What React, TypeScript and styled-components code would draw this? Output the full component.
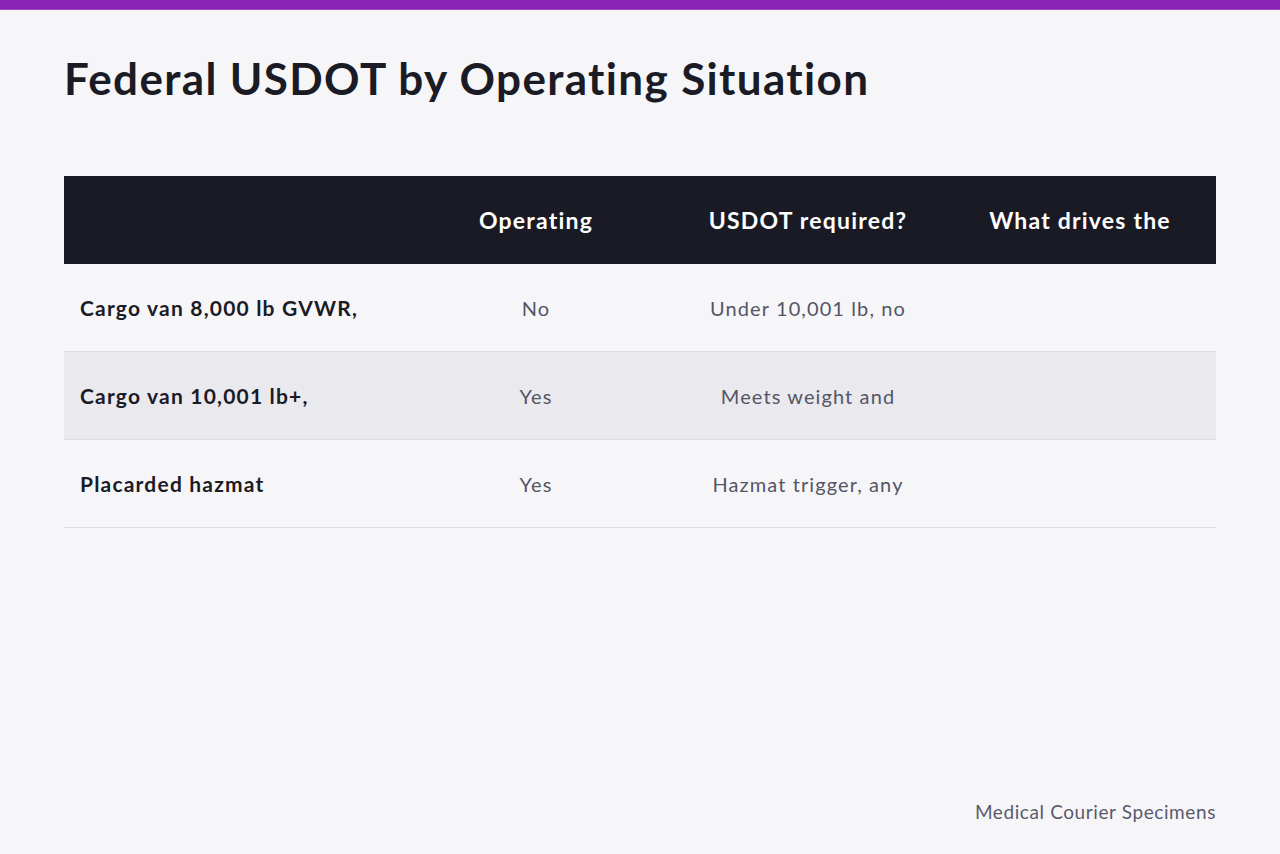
import styled, { createGlobalStyle } from "styled-components";

const GlobalStyle = createGlobalStyle`
  html, body {
    margin: 0;
    padding: 0;
    background: #f6f6f9;
  }
  * {
    box-sizing: border-box;
  }
`;

const Page = styled.div`
  width: 100vw;
  min-height: 100vh;
  height: 854px;
  display: flex;
  flex-direction: column;
  background: #f6f6f9;
  font-family: Lato, "Open Sans", sans-serif;
  color: #1b1b26;
`;

const TopBar = styled.div`
  height: 10px;
  background: #8a22b8;
  border-bottom: 1px solid #a04ccb;
  flex-shrink: 0;
`;

const Main = styled.main`
  flex: 1;
  display: flex;
  flex-direction: column;
  padding: 0 64px 30px;
`;

const Title = styled.h1`
  margin: 40px 0 0;
  font-size: 44px;
  line-height: 56px;
  font-weight: 700;
  letter-spacing: 1.35px;
  color: #1b1b26;
`;

const Table = styled.div`
  margin-top: 70px;
  display: flex;
  flex-direction: column;
`;

const Row = styled.div<{ $head?: boolean; $shaded?: boolean }>`
  display: grid;
  grid-template-columns: 336px repeat(3, 1fr);
  height: 88px;
  align-items: center;
  background: ${(p) => (p.$head ? "#1a1a25" : p.$shaded ? "#e9e9ee" : "transparent")};
  border-bottom: ${(p) => (p.$head ? "none" : "1px solid #dcdce3")};
`;

const HeadCell = styled.div`
  padding: 0 16px;
  text-align: center;
  color: #ffffff;
  font-size: 23px;
  font-weight: 700;
  letter-spacing: 1.2px;
  white-space: nowrap;
  overflow: hidden;
`;

const LabelCell = styled.div`
  padding: 0 16px;
  font-size: 21px;
  font-weight: 700;
  letter-spacing: 1.2px;
  color: #1b1b26;
  white-space: nowrap;
`;

const Cell = styled.div`
  padding: 0 16px;
  text-align: center;
  font-size: 20px;
  font-weight: 400;
  letter-spacing: 1.1px;
  color: #555566;
  white-space: nowrap;
`;

const Footer = styled.div`
  margin-top: auto;
  text-align: right;
  font-size: 19px;
  line-height: 24px;
  letter-spacing: 0.6px;
  color: #5a5a6e;
`;

const rows = [
  { label: "Cargo van 8,000 lb GVWR,", op: "No", req: "Under 10,001 lb, no", why: "" },
  { label: "Cargo van 10,001 lb+,", op: "Yes", req: "Meets weight and", why: "" },
  { label: "Placarded hazmat", op: "Yes", req: "Hazmat trigger, any", why: "" },
];

export default function App() {
  return (
    <>
      <GlobalStyle />
      <Page>
        <TopBar />
        <Main>
          <Title>Federal USDOT by Operating Situation</Title>
          <Table>
            <Row $head>
              <HeadCell />
              <HeadCell>Operating</HeadCell>
              <HeadCell>USDOT required?</HeadCell>
              <HeadCell>What drives the</HeadCell>
            </Row>
            {rows.map((r, i) => (
              <Row key={r.label} $shaded={i === 1}>
                <LabelCell>{r.label}</LabelCell>
                <Cell>{r.op}</Cell>
                <Cell>{r.req}</Cell>
                <Cell>{r.why}</Cell>
              </Row>
            ))}
          </Table>
          <Footer>Medical Courier Specimens</Footer>
        </Main>
      </Page>
    </>
  );
}
